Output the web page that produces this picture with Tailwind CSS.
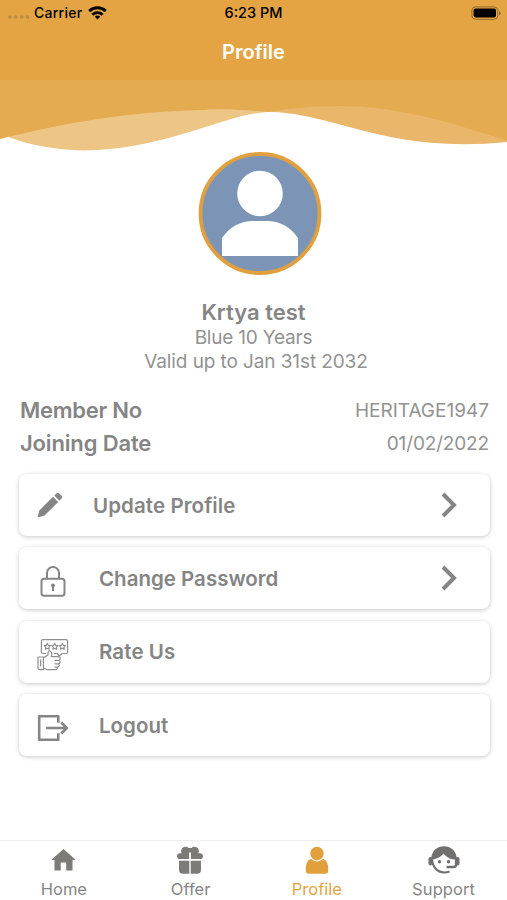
<!DOCTYPE html>
<html lang="en">

<head>
    <meta charset="UTF-8">
    <meta name="viewport" content="width=device-width, initial-scale=1.0">
    <title>Profile</title>
    <script src="https://cdn.jsdelivr.net/npm/@tailwindcss/browser@4"></script>
</head>

<body class="bg-white font-['Inter',sans-serif] text-[#858585]">
    <div class="flex flex-col w-full h-[900px] overflow-hidden">
        <!-- Header -->
        <header class="bg-[#e4a444] h-20 shrink-0">
            <!-- Status bar -->
            <div class="grid grid-cols-3 items-center h-[26px] pl-2 pr-[6px] text-[14px] font-medium text-black">
                <div class="flex items-center">
                    <svg class="w-[22px] h-1 mt-2 mr-1" viewBox="0 0 22 4" fill="#b58a45">
                        <circle cx="2" cy="2" r="1.8" />
                        <circle cx="7.8" cy="2" r="1.8" />
                        <circle cx="13.6" cy="2" r="1.8" />
                        <circle cx="19.4" cy="2" r="1.8" />
                    </svg>
                    <span class="-mt-px tracking-[0.25px]">Carrier</span>
                    <svg class="w-[19px] h-[15px] ml-[6px] -mt-px" viewBox="0 0 19 15" fill="none" stroke="#000" stroke-width="2.9">
                        <path d="M1.2 6.1a12 12 0 0 1 16.6 0" />
                        <path d="M4.4 9.7a7.3 7.3 0 0 1 10.2 0" />
                        <path d="M9.5 14.6l-2.7-2.8a3.9 3.9 0 0 1 5.4 0z" fill="#000" stroke="none" />
                    </svg>
                </div>
                <span class="pr-[2px] text-center whitespace-nowrap text-[14.5px]">6:23 PM</span>
                <svg class="w-[30px] h-[14px] justify-self-end" viewBox="0 0 30 14">
                    <rect x=".9" y=".9" width="25.8" height="12.4" rx="3.6" fill="none" stroke="#936b30" />
                    <rect x="2.6" y="2.6" width="22.4" height="9" rx="2" />
                    <path d="M28 5v4.4q1.6-.6 1.6-2.2T28 5z" fill="#936b30" />
                </svg>
            </div>
            <h1 class="h-[54px] leading-[53px] text-center text-[20px] font-semibold text-white">Profile</h1>
        </header>

        <!-- Wave -->
        <svg class="w-full h-[72px] shrink-0" viewBox="0 0 507 72">
            <path d="M8 57L60 30H267V32C222 35 165 70 83 70.500C55 70 30 65 8 57Z" fill="#edc686" />
            <path d="M267 32V20H507V62C384 74 335 32 267 32Z" fill="#e9b66a" />
            <path d="M0 0H507V60.500C455 44 400 26 340 26C310 26 285 29 267 32C240 29 215 30 200 30C125 32 65 43 0 59Z" fill="#e4ab50" />
        </svg>

        <!-- Avatar and membership -->
        <section class="flex flex-col items-center">
            <svg class="w-[124px] h-[124px] ml-[13px]" viewBox="0 0 124 124">
                <circle cx="62" cy="61.500" r="59.500" fill="#7c95b7" stroke="#e1a03f" stroke-width="3.800" />
                <circle cx="62" cy="41.500" r="22.800" fill="#fff" />
                <path d="M24 104V86Q36 69 55 69H69Q88 69 100 86V104Z" fill="#fff" />
            </svg>
            <h2 class="mt-[23px] leading-[27px] text-[22px] font-semibold">Krtya test</h2>
            <p class="leading-6 text-[19px] tracking-[-0.2px] text-[#929292]">Blue 10 Years</p>
            <p class="leading-[23px] ml-[5px] text-[19px] tracking-[-0.1px] text-[#929292]">Valid up to Jan 31st 2032</p>
        </section>

        <dl class="mt-[21px] pl-5 pr-[18px]">
            <div class="flex justify-between items-center h-[33px]">
                <dt class="text-[22px] font-semibold tracking-[-0.25px]">Member No</dt>
                <dd class="mt-[2px] text-[19px] text-[#929292]">HERITAGE1947</dd>
            </div>
            <div class="flex justify-between items-center h-8">
                <dt class="text-[22px] font-semibold tracking-[-0.15px]">Joining Date</dt>
                <dd class="mt-[2px] text-[19px] tracking-[-0.15px] text-[#929292]">01/02/2022</dd>
            </div>
        </dl>

        <!-- Menu -->
        <ul class="flex flex-col gap-[11.400px] mt-[15px] pl-[19px] pr-[17.500px] text-[20.500px] font-semibold">
            <li class="flex items-center h-[62px] pl-[18px] pr-[33px] rounded-lg shadow-[0_1px_4px_rgba(0,0,0,0.22)]">
                <svg class="w-[26px] h-[26px]" viewBox="0 0 26 26" fill="#858585">
                    <path d="M.6 25.400L2.300 18.500L16 4.800L21.200 10L7.500 23.500Z" />
                    <path d="M17.300 3.500L19.600 1.300Q20.900.2 22.300 1.400L24.500 3.700Q25.600 5 24.600 6.300L22.400 8.700Z" />
                </svg>
                <span class="mt-[2px] ml-[30px] grow tracking-[0.1px]">Update Profile</span>
                <svg class="w-4 h-[26px]" viewBox="0 0 16 26" fill="none" stroke="#858585" stroke-width="4">
                    <path d="M2 2L13 13L2 24" />
                </svg>
            </li>
            <li class="flex items-center h-[62px] pl-[18px] pr-[33px] rounded-lg shadow-[0_1px_4px_rgba(0,0,0,0.22)]">
                <svg class="w-8 h-8 mt-[8px]" viewBox="0 0 32 32" fill="none" stroke="#858585" stroke-width="2">
                    <rect x="4.500" y="12.700" width="23" height="17" rx="2.500" />
                    <path d="M10 12V7a6 6 0 0 1 12 0v5" />
                    <circle cx="16" cy="19.500" r="2" fill="#858585" stroke="none" />
                    <path d="M16 19v6" />
                </svg>
                <span class="mt-[2px] ml-[30px] grow">Change Password</span>
                <svg class="w-4 h-[26px]" viewBox="0 0 16 26" fill="none" stroke="#858585" stroke-width="4">
                    <path d="M2 2L13 13L2 24" />
                </svg>
            </li>
            <li class="flex items-center h-[62px] pl-[18px] pr-[33px] rounded-lg shadow-[0_1px_4px_rgba(0,0,0,0.22)]">
                <svg class="w-8 h-8 mt-[6px]" viewBox="0 0 32 32" fill="none" stroke="#8f8f8f" stroke-width="1.200" stroke-linejoin="round">
                    <path d="M9 14.500H6Q4.400 14.500 4.400 13V2Q4.400.7 6 .7H29Q30.600.7 30.600 2V13Q30.600 14.500 29 14.500H25L22.600 17L20 14.500H17" />
                    <path d="M10.300 4.400l1 2 2.100.3-1.500 1.500.3 2.100-1.900-1-1.900 1 .3-2.100-1.500-1.500 2.100-.3zM17.800 4.400l1 2 2.100.3-1.500 1.500.3 2.100-1.900-1-1.900 1 .3-2.100-1.500-1.500 2.100-.3zM25.300 4.400l1 2 2.100.3-1.500 1.500.3 2.100-1.900-1-1.900 1 .3-2.100-1.500-1.500 2.100-.3z" />
                    <path d="M1 18H6.400V30.700H2.500Q1 30.700 1 29ZM3.600 20.500v7" />
                    <path d="M6.400 19L11 16V13.500Q11.400 11.700 13 12Q15.200 13 14.700 15.500L14.200 17.700H21.500Q23.400 18 23.200 19.700Q23 21.200 21.300 21.300H17.500M21.300 21.300Q23.500 22 23 23.500Q22.600 24.800 20.800 24.800H17.500M20.800 24.800Q22.600 25.500 22.100 26.900Q21.600 28.100 20 28.100H17.500M20 28.100Q20.800 30.700 18.500 30.700H10.500L6.400 29" />
                </svg>
                <span class="mt-[2px] ml-[30px] grow tracking-[0.1px]">Rate Us</span>
            </li>
            <li class="flex items-center h-[62px] pl-[18px] pr-[33px] rounded-lg shadow-[0_1px_4px_rgba(0,0,0,0.22)]">
                <svg class="w-8 h-7 mt-[5px]" viewBox="0 0 32 28" fill="none" stroke="#858585" stroke-width="2.600" stroke-linejoin="round">
                    <path d="M21.300 8.800V2.200H2.200V25.800H21.300V19.200" />
                    <path d="M9 14H29.500M24.300 8.500L29.800 14L24.300 19.500" />
                </svg>
                <span class="mt-[2px] ml-[30px] grow">Logout</span>
            </li>
        </ul>

        <!-- Tab bar -->
        <nav class="grid grid-cols-4 h-[60px] mt-auto shrink-0 border-t border-[#eeeeee] text-[16.500px] text-[#858585]">
            <a class="flex flex-col items-center pt-[5px]">
                <svg class="w-7 h-7" viewBox="0 0 28 28" fill="#7d7b78">
                    <path d="M14.500 3L26.800 14H23.500V24.500H17.200V16.500H11.700V24.500H5.500V14H2.200Z" />
                </svg>
                <span class="mt-[3px] ml-px leading-6">Home</span>
            </a>
            <a class="flex flex-col items-center pt-[5px]">
                <svg class="w-7 h-7" viewBox="0 0 28 28" fill="#7d7b78">
                    <path d="M4 13Q1 13 1 10.200Q1 7.200 4 7.200H5.700Q4.400 4.500 6 2.200Q8 .6 11 .8L12.500 2H15.500L17 .8Q20 .6 22 2.200Q23.600 4.500 22.300 7.200H24Q27 7.200 27 10.200Q27 13 24 13H14.900V6.500H13.100V13Z" />
                    <path d="M3 14.700H13.300V27.700H7Q3 27.700 3 23.700ZM14.700 14.700H25V23.700Q25 27.700 21 27.700H14.700Z" />
                </svg>
                <span class="mt-[3px] ml-px leading-6">Offer</span>
            </a>
            <a class="flex flex-col items-center pt-[5px] text-[#e4a444]">
                <svg class="w-7 h-7" viewBox="0 0 28 28" fill="#e2a03c">
                    <circle cx="14" cy="7.500" r="6.700" />
                    <path d="M7.700 12.800Q14 18 20.300 12.800Q25.200 15.500 25.200 22V24.500Q25.200 27.700 22 27.700H6Q2.800 27.700 2.800 24.500V22Q2.800 15.500 7.700 12.800Z" />
                </svg>
                <span class="mt-[3px] leading-6">Profile</span>
            </a>
            <a class="flex flex-col items-center pt-[5px]">
                <svg class="w-8 h-7" viewBox="0 0 32 28" fill="#72706e">
                    <path d="M3 13C4 4 9.500.3 16 .3S28 4 29 13L27.500 13.500Q20 13.500 15.500 7.500Q11.500 12.500 4.500 13.500Z" />
                    <rect x=".5" y="11" width="3.600" height="8.500" rx="1.800" />
                    <rect x="27.900" y="11" width="3.600" height="8.500" rx="1.800" />
                    <path d="M4 12.500C4 20 9 26.500 16 26.500Q19 26.500 21.500 25.500" fill="none" stroke="#72706e" stroke-width="2.200" />
                    <path d="M28.200 13V18.500Q28 21 25.500 21H18.500" fill="none" stroke="#72706e" stroke-width="2.600" />
                    <circle cx="11.500" cy="15.800" r="1.700" />
                    <circle cx="20.500" cy="15.800" r="1.700" />
                </svg>
                <span class="mt-[3px] leading-6 tracking-[0.1px]">Support</span>
            </a>
        </nav>
    </div>
</body>

</html>
